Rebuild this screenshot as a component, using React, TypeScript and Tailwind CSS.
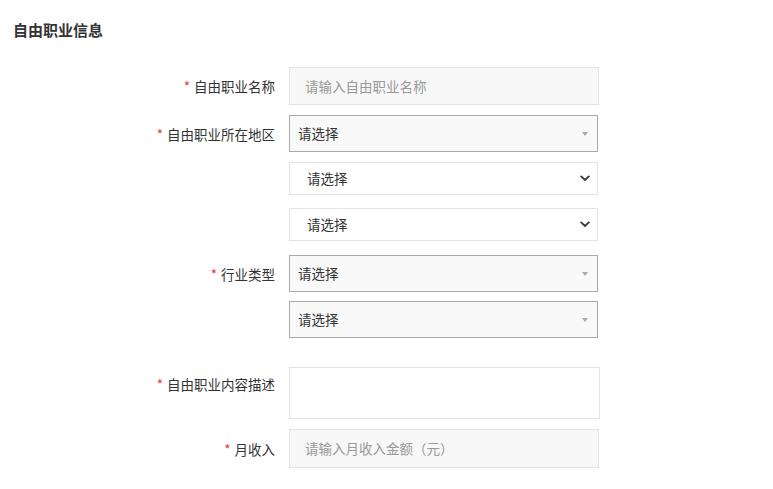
import React from "react";

const font = { fontFamily: '"Noto Sans CJK SC", "Microsoft YaHei", sans-serif' };

function Label({ text, className = "" }: { text: string; className?: string }) {
  return (
    <div className={`w-[289px] shrink-0 pr-[14px] text-right text-[13.5px] leading-[20px] text-[#333] ${className}`}>
      <span className="mr-[4px] text-[#d9363e]">*</span>
      {text}
    </div>
  );
}

function Spacer() {
  return <div className="w-[289px] shrink-0" />;
}

function Caret() {
  return (
    <svg width="6" height="4" viewBox="0 0 6 4" className="shrink-0">
      <path d="M0 0 L6 0 L3 4 Z" fill="#aaa" />
    </svg>
  );
}

function Chevron() {
  return (
    <svg width="10" height="7" viewBox="0 0 10 7" className="shrink-0">
      <path d="M1.2 1.4 L5 5 L8.8 1.4" fill="none" stroke="#3a3a3a" strokeWidth="1.9" strokeLinecap="round" strokeLinejoin="round" />
    </svg>
  );
}

function FakeSelect() {
  return (
    <div className="flex h-[37px] w-[309px] items-center justify-between border border-[#a9a9a9] bg-[#f9f9f9] pl-[8px] pr-[9px] text-[13.5px] text-[#333]">
      <span>请选择</span>
      <Caret />
    </div>
  );
}

function NativeSelect() {
  return (
    <div className="flex h-[33px] w-[309px] items-center justify-between border border-[#e3e3e3] bg-white pl-[17px] pr-[7px] text-[13.5px] text-[#333]">
      <span>请选择</span>
      <Chevron />
    </div>
  );
}

export default function App() {
  return (
    <div className="min-h-[489px] w-[773px] bg-white" style={font}>
      <div className="pl-[13px] pt-[20px] text-[15px] font-bold leading-[20px] text-[#333]">自由职业信息</div>
      <div className="mt-[27px] flex flex-col">
        <div className="flex items-center">
          <Label text="自由职业名称" />
          <div className="flex h-[38px] w-[310px] items-center border border-[#e3e3e3] bg-[#f7f7f7] pl-[15px] text-[13.5px] text-[#999]">
            请输入自由职业名称
          </div>
        </div>
        <div className="mt-[10px] flex items-center">
          <Label text="自由职业所在地区" />
          <FakeSelect />
        </div>
        <div className="mt-[10px] flex">
          <Spacer />
          <NativeSelect />
        </div>
        <div className="mt-[13px] flex">
          <Spacer />
          <NativeSelect />
        </div>
        <div className="mt-[14px] flex items-center">
          <Label text="行业类型" />
          <FakeSelect />
        </div>
        <div className="mt-[9px] flex">
          <Spacer />
          <FakeSelect />
        </div>
        <div className="mt-[29px] flex items-start">
          <Label text="自由职业内容描述" className="pt-[7px]" />
          <div className="h-[52px] w-[311px] border border-[#e3e3e3] bg-white" />
        </div>
        <div className="mt-[10px] flex items-center">
          <Label text="月收入" />
          <div className="flex h-[39px] w-[310px] items-center border border-[#e3e3e3] bg-[#f7f7f7] pl-[15px] text-[13.5px] text-[#999]">
            请输入月收入金额（元）
          </div>
        </div>
      </div>
    </div>
  );
}
